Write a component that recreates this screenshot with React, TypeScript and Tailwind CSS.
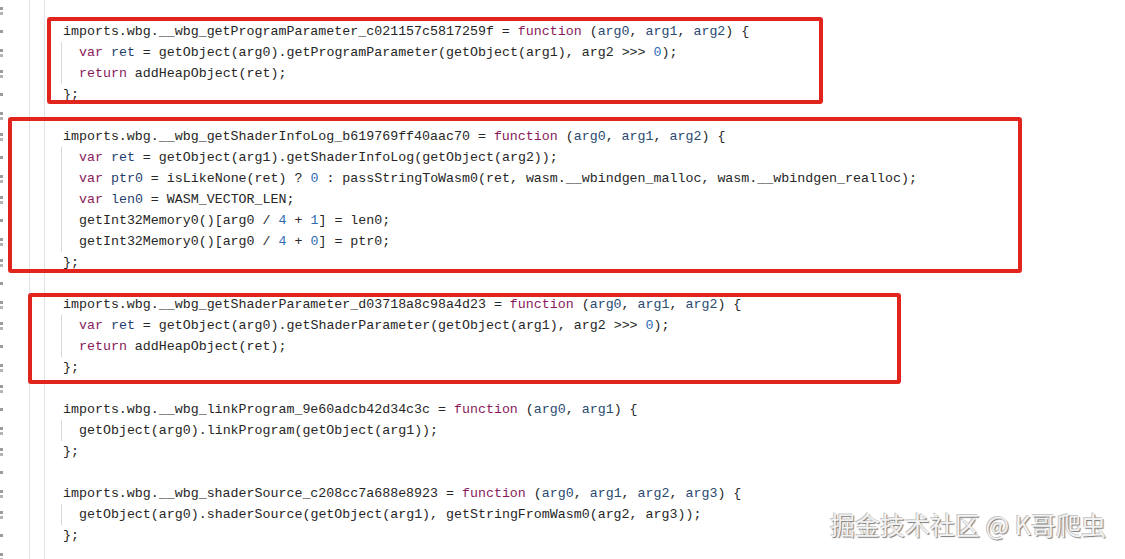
import React from "react";

type Props = { children: React.ReactNode };

// token colours
const K = ({ children }: Props) => <span className="text-[#8a1a5b]">{children}</span>;
const V = ({ children }: Props) => <span className="text-[#1f3f6e]">{children}</span>;
const P = ({ children }: Props) => <span className="text-[#2a4a70]">{children}</span>;
const N = ({ children }: Props) => <span className="text-[#2f6cb3]">{children}</span>;

type Row = { body?: boolean; code?: React.ReactNode };

const args = (...names: string[]) => (
  <>
    (
    {names.map((n, i) => (
      <React.Fragment key={n}>
        <P>{n}</P>
        {i < names.length - 1 ? ", " : ""}
      </React.Fragment>
    ))}
    )
  </>
);

const header = (name: string, params: string[]) => (
  <>
    {`imports.wbg.${name} = `}
    <K>function</K> {args(...params)} {"{"}
  </>
);

const rows: Row[] = [
  {},
  { code: header("__wbg_getProgramParameter_c021157c5817259f", ["arg0", "arg1", "arg2"]) },
  {
    body: true,
    code: (
      <>
        <K>var</K> <V>ret</V> = getObject(arg0).getProgramParameter(getObject(arg1), arg2 &gt;&gt;&gt; <N>0</N>);
      </>
    ),
  },
  {
    body: true,
    code: (
      <>
        <K>return</K> addHeapObject(ret);
      </>
    ),
  },
  { code: "};" },
  {},
  { code: header("__wbg_getShaderInfoLog_b619769ff40aac70", ["arg0", "arg1", "arg2"]) },
  {
    body: true,
    code: (
      <>
        <K>var</K> <V>ret</V> = getObject(arg1).getShaderInfoLog(getObject(arg2));
      </>
    ),
  },
  {
    body: true,
    code: (
      <>
        <K>var</K> <V>ptr0</V> = isLikeNone(ret) ? <N>0</N> : passStringToWasm0(ret, wasm.__wbindgen_malloc, wasm.__wbindgen_realloc);
      </>
    ),
  },
  {
    body: true,
    code: (
      <>
        <K>var</K> <V>len0</V> = WASM_VECTOR_LEN;
      </>
    ),
  },
  {
    body: true,
    code: (
      <>
        getInt32Memory0()[arg0 / <N>4</N> + <N>1</N>] = len0;
      </>
    ),
  },
  {
    body: true,
    code: (
      <>
        getInt32Memory0()[arg0 / <N>4</N> + <N>0</N>] = ptr0;
      </>
    ),
  },
  { code: "};" },
  {},
  { code: header("__wbg_getShaderParameter_d03718a8c98a4d23", ["arg0", "arg1", "arg2"]) },
  {
    body: true,
    code: (
      <>
        <K>var</K> <V>ret</V> = getObject(arg0).getShaderParameter(getObject(arg1), arg2 &gt;&gt;&gt; <N>0</N>);
      </>
    ),
  },
  {
    body: true,
    code: (
      <>
        <K>return</K> addHeapObject(ret);
      </>
    ),
  },
  { code: "};" },
  {},
  { code: header("__wbg_linkProgram_9e60adcb42d34c3c", ["arg0", "arg1"]) },
  { body: true, code: "getObject(arg0).linkProgram(getObject(arg1));" },
  { code: "};" },
  {},
  { code: header("__wbg_shaderSource_c208cc7a688e8923", ["arg0", "arg1", "arg2", "arg3"]) },
  { body: true, code: "getObject(arg0).shaderSource(getObject(arg1), getStringFromWasm0(arg2, arg3));" },
  { code: "};" },
  {},
];

// red annotation frames drawn over the code
const boxes = [
  "left-[47px] top-[17px] w-[776px] h-[87px]",
  "left-[8px] top-[117px] w-[1014px] h-[156px]",
  "left-[28px] top-[293px] w-[873px] h-[91px]",
];

export default function App() {
  return (
    <div className="relative w-full h-[559px] overflow-hidden bg-white font-['Liberation_Mono',monospace] text-[13.3px] text-[#262626]">
      <div className="flex h-full">
        {/* line numbers are scrolled off, only slivers of the last digit show */}
        <div className="w-[4px] flex flex-col">
          {rows.map((_, i) => (
            <div key={i} className="h-[21px] flex flex-col justify-center gap-[2px] shrink-0">
              <div className="w-[3px] h-[3px] bg-[#9c9c9c]" />
              {i % 3 !== 1 && <div className="w-[3px] h-[3px] bg-[#b4b4b4]" />}
            </div>
          ))}
        </div>
        <div className="w-[26px] border-r border-[#dfe3e8]" />
        <div className="w-[15px] border-r border-[#dfe3e8]" />

        <div className="flex-1 flex flex-col">
          {rows.map((r, i) =>
            r.body ? (
              <div key={i} className="h-[21px] leading-[21px] pl-[16px] shrink-0">
                <div className="h-full border-l border-[#d9d9d9] pl-[17px] whitespace-pre">{r.code}</div>
              </div>
            ) : (
              <div key={i} className="h-[21px] leading-[21px] pl-[18px] whitespace-pre shrink-0">
                {r.code}
              </div>
            )
          )}
        </div>
      </div>

      {boxes.map((b) => (
        <div key={b} className={`absolute ${b} border-4 border-[#e1251d] rounded-[3px]`} />
      ))}

      <div className="absolute left-[830px] top-[507px] font-['Noto_Sans_CJK_SC',sans-serif] text-[25px] leading-[34px] text-[#f2f2f2] [text-shadow:1px_1px_1px_#7a7a7a,-1px_-1px_0_#c8c8c8] whitespace-nowrap">
        掘金技术社区 @ K哥爬虫
      </div>
    </div>
  );
}
